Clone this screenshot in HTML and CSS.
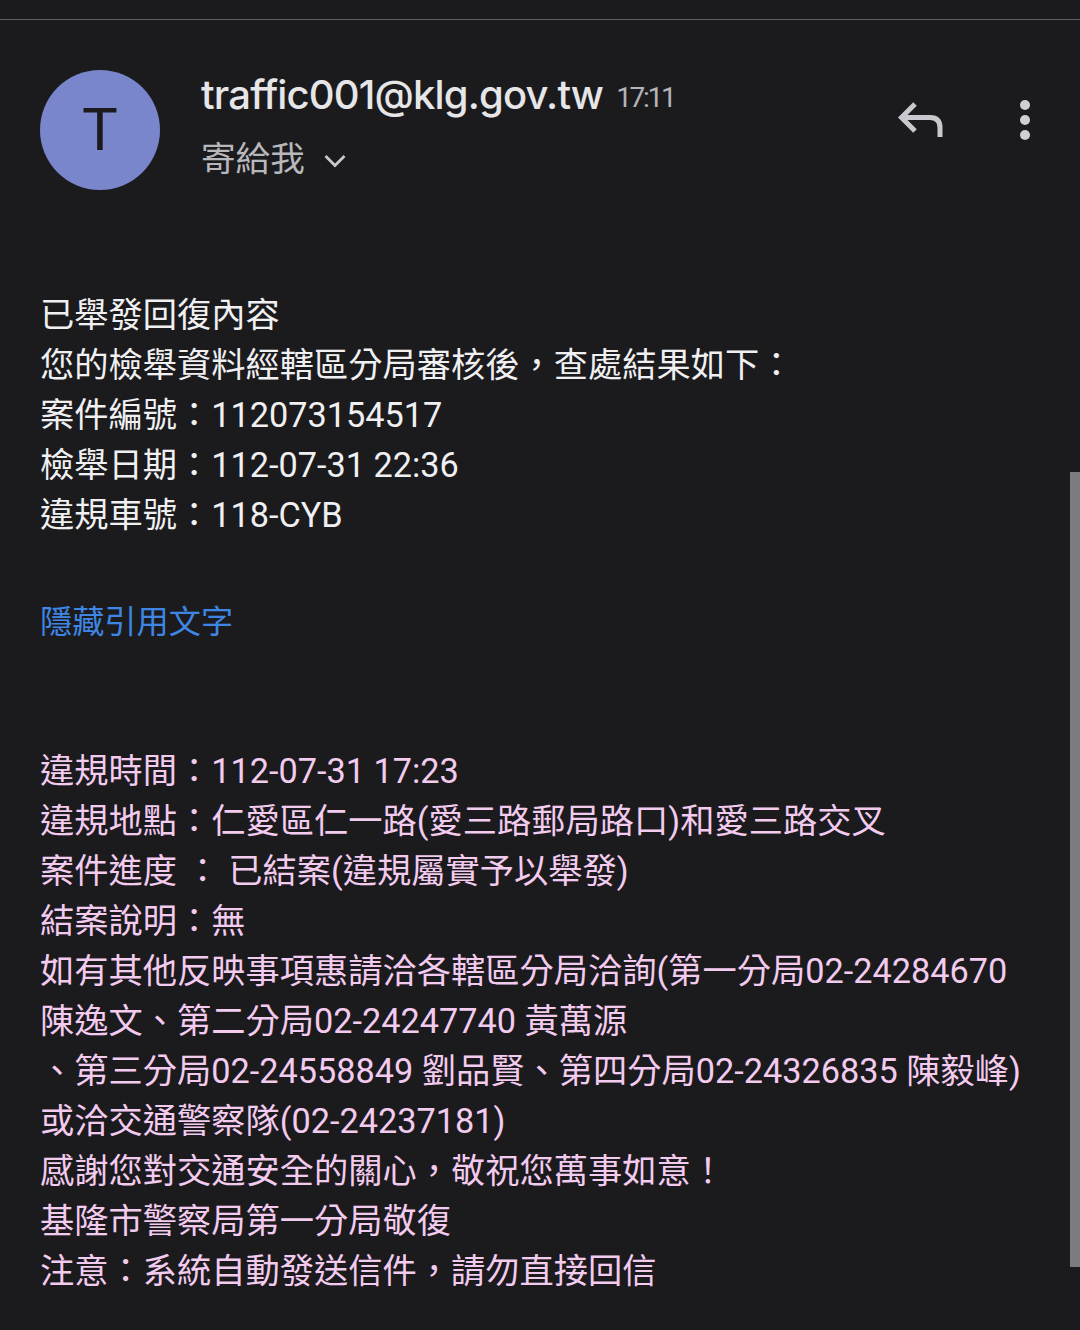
FILE: index.html
```html
<!DOCTYPE html>
<html lang="zh-Hant">
<head>
    <meta charset="UTF-8">
    <title>traffic001@klg.gov.tw</title>
    <link rel="stylesheet" href="styles.css">
</head>
<body>
    <div class="top-line"></div>
    <div class="scrollbar"></div>

    <header class="mail-head">
        <div class="avatar">T</div>
        <div class="sender">
            <div class="sender-line">
                <span class="sender-name">traffic001@klg.gov.tw</span>
                <span class="sender-time">17:11</span>
            </div>
            <div class="to-line">
                <span>寄給我</span>
                <svg class="chevron" width="22" height="14" viewBox="0 0 22 14">
                    <path d="M1.5 2 L11 11.5 L20.5 2" fill="none" stroke="#c9c9cc" stroke-width="2.8"/>
                </svg>
            </div>
        </div>
        <svg class="reply" width="46" height="36" viewBox="0 0 46 36">
            <path d="M17 2 L3.5 15.5 L17 29 M3.5 15.5 H32 Q42 15.5 42 25.5 V35" fill="none" stroke="#c8c9ce" stroke-width="5"/>
        </svg>
        <div class="more">
            <i></i><i></i><i></i>
        </div>
    </header>

    <section class="mail-body">
        <p>已舉發回復內容</p>
        <p>您的檢舉資料經轄區分局審核後，查處結果如下：</p>
        <p>案件編號：112073154517</p>
        <p>檢舉日期：112-07-31 22:36</p>
        <p>違規車號：118-CYB</p>
    </section>

    <a class="quote-toggle">隱藏引用文字</a>

    <section class="mail-body quoted">
        <p>違規時間：112-07-31 17:23</p>
        <p>違規地點：仁愛區仁一路(愛三路郵局路口)和愛三路交叉</p>
        <p>案件進度 ： 已結案(違規屬實予以舉發)</p>
        <p>結案說明：無</p>
        <p>如有其他反映事項惠請洽各轄區分局洽詢(第一分局02-24284670</p>
        <p>陳逸文、第二分局02-24247740 黃萬源</p>
        <p>、第三分局02-24558849 劉品賢、第四分局02-24326835 陳毅峰)</p>
        <p>或洽交通警察隊(02-24237181)</p>
        <p>感謝您對交通安全的關心，敬祝您萬事如意！</p>
        <p>基隆市警察局第一分局敬復</p>
        <p>注意：系統自動發送信件，請勿直接回信</p>
    </section>
</body>
</html>
```

FILE: styles.css
```css
html, body {
    margin: 0;
    height: 1330px;
    overflow: hidden;
}

body {
    background-color: #1b1b1e;
    font-family: Roboto, "Noto Sans CJK TC", sans-serif;
    padding-top: 19px;
    box-sizing: border-box;
}

.top-line {
    height: 1px;
    background-color: #5f5f62;
}

.scrollbar {
    position: absolute;
    top: 472px;
    right: 0;
    width: 10px;
    height: 795px;
    background-color: #7b7b80;
}

.mail-head {
    display: flex;
    align-items: flex-start;
    padding: 50px 0 0 40px;
    height: 220px;
    box-sizing: border-box;
}

.avatar {
    width: 120px;
    height: 120px;
    border-radius: 50%;
    background-color: #7986cb;
    color: #1b1b1e;
    font-size: 60px;
    line-height: 120px;
    text-align: center;
    flex-shrink: 0;
}

.sender {
    margin-left: 41px;
    flex: 1;
}

.sender-line {
    display: flex;
    align-items: baseline;
    height: 50px;
    line-height: 50px;
}

.sender-name {
    font-family: Inter, Roboto, sans-serif;
    font-size: 40px;
    font-weight: 500;
    letter-spacing: -0.83px;
    color: #e6e6e8;
}

.sender-time {
    margin-left: 13px;
    font-size: 28px;
    letter-spacing: -2.3px;
    color: #b4b4b8;
    transform: translateY(-2px);
}

.to-line {
    display: flex;
    align-items: center;
    margin-top: 14px;
    font-size: 34.6px;
    line-height: 50px;
    color: #b8b8bc;
}

.chevron {
    margin-left: 19px;
    margin-top: 4px;
}

.reply {
    margin-top: 32px;
    flex-shrink: 0;
}

.more {
    display: flex;
    flex-direction: column;
    gap: 5px;
    margin: 30px 50px 0 76px;
}

.more i {
    width: 10px;
    height: 10px;
    border-radius: 50%;
    background-color: #d0d0d4;
}

.mail-body {
    padding-left: 40px;
    margin-top: 50px;
    font-size: 34.25px;
    line-height: 50px;
    color: #f0f0f2;
    white-space: nowrap;
}

.mail-body p {
    margin: 0;
}

.quote-toggle {
    display: block;
    margin: 57px 0 0 40px;
    font-size: 32.2px;
    line-height: 50px;
    color: #3f86e4;
}

.quoted {
    margin-top: 99px;
    color: #f2cbee;
}
```
